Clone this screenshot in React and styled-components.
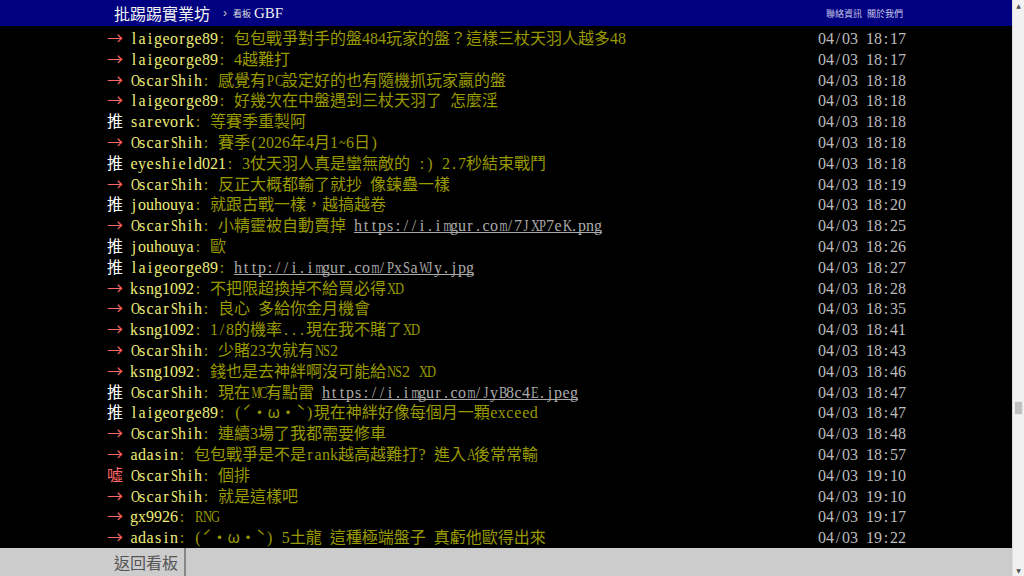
import React from "react";
import styled, { createGlobalStyle } from "styled-components";

const GlobalStyle = createGlobalStyle`
  html, body {
    margin: 0;
    padding: 0;
    height: 100%;
    overflow: hidden;
    background: #000;
  }
  #root {
    height: 100%;
  }
`;

const pushes = [
  ["→", "laigeorge89", "包包戰爭對手的盤484玩家的盤？這樣三杖天羽人越多48", "04/03 18:17"],
  ["→", "laigeorge89", "4越難打", "04/03 18:17"],
  ["→", "OscarShih", "感覺有PC設定好的也有隨機抓玩家贏的盤", "04/03 18:18"],
  ["→", "laigeorge89", "好幾次在中盤遇到三杖天羽了 怎麼淫", "04/03 18:18"],
  ["推", "sarevork", "等賽季重製阿", "04/03 18:18"],
  ["→", "OscarShih", "賽季(2026年4月1~6日)", "04/03 18:18"],
  ["推", "eyeshield021", "3仗天羽人真是蠻無敵的 :) 2.7秒結束戰鬥", "04/03 18:18"],
  ["→", "OscarShih", "反正大概都輸了就抄 像鍊蠱一樣", "04/03 18:19"],
  ["推", "jouhouya", "就跟古戰一樣，越搞越卷", "04/03 18:20"],
  ["→", "OscarShih", "小精靈被自動賣掉 ", "04/03 18:25", "https://i.imgur.com/7JXP7eK.png"],
  ["推", "jouhouya", "歐", "04/03 18:26"],
  ["推", "laigeorge89", "", "04/03 18:27", "http://i.imgur.com/PxSaWJy.jpg"],
  ["→", "ksng1092", "不把限超換掉不給買必得XD", "04/03 18:28"],
  ["→", "OscarShih", "良心 多給你金月機會", "04/03 18:35"],
  ["→", "ksng1092", "1/8的機率...現在我不賭了XD", "04/03 18:41"],
  ["→", "OscarShih", "少賭23次就有NS2", "04/03 18:43"],
  ["→", "ksng1092", "錢也是去神絆啊沒可能給NS2 XD", "04/03 18:46"],
  ["推", "OscarShih", "現在MC有點雷 ", "04/03 18:47", "https://i.imgur.com/JyB8c4E.jpeg"],
  ["推", "laigeorge89", "(ˊ・ω・ˋ)現在神絆好像每個月一顆exceed", "04/03 18:47"],
  ["→", "OscarShih", "連續3場了我都需要修車", "04/03 18:48"],
  ["→", "adasin", "包包戰爭是不是rank越高越難打? 進入A後常常輸", "04/03 18:57"],
  ["噓", "OscarShih", "個排", "04/03 19:10"],
  ["→", "OscarShih", "就是這樣吧", "04/03 19:10"],
  ["→", "gx9926", "RNG", "04/03 19:17"],
  ["→", "adasin", "(ˊ・ω・ˋ) 5土龍 這種極端盤子 真虧他歐得出來", "04/03 19:22"],
];

// terminal grid: every half-width char sits in an 8px cell
const squeezeOf = (c) => (/[mwMW]/.test(c) ? 0.64 : /[A-Z~]/.test(c) ? 0.78 : 1);

function Mono({ text }) {
  return [...text].map((c, i) => (
    <Cell key={i} squeeze={squeezeOf(c)}>
      {c}
    </Cell>
  ));
}

function Mixed({ text }) {
  const parts = text.split(/([\x00-\x7f]+)/).filter((p) => p !== "");
  return parts.map((p, i) =>
    /^[\x00-\x7f]+$/.test(p) ? <Mono key={i} text={p} /> : <Full key={i}>{p}</Full>
  );
}

export default function App() {
  return (
    <>
      <GlobalStyle />
      <Page>
        <Main>
          <TopBar>
            <BarInner>
              <Brand>批踢踢實業坊</Brand>
              <Crumb>›</Crumb>
              <BoardLabel>看板</BoardLabel>
              <BoardName>GBF</BoardName>
              <Links>
                <a href="#">聯絡資訊</a>
                <a href="#">關於我們</a>
              </Links>
            </BarInner>
          </TopBar>

          <Content>
            <Pushes>
              {pushes.map(([tag, user, text, time, link], i) => (
                <Push key={i}>
                  <Tag tone={tag === "推" ? "up" : "down"}>
                    <Full>{tag}</Full>
                  </Tag>
                  <UserId>
                    <Mono text={user} />
                  </UserId>
                  <PushContent>
                    <Mono text=": " />
                    <Mixed text={text} />
                    {link && (
                      <LinkText href="#">
                        <Mono text={link} />
                      </LinkText>
                    )}
                  </PushContent>
                  <DateTime>
                    <Mono text={time} />
                  </DateTime>
                </Push>
              ))}
            </Pushes>
          </Content>

          <BottomBar>
            <BarInner>
              <BackButton href="#">返回看板</BackButton>
            </BarInner>
          </BottomBar>
        </Main>

        <ScrollBar>
          <Arrow>▲</Arrow>
          <Track>
            <Thumb offset={401} />
          </Track>
          <Arrow>▼</Arrow>
        </ScrollBar>
      </Page>
    </>
  );
}

const Page = styled.div`
  display: flex;
  height: 576px;
  width: 1024px;
`;

const Main = styled.div`
  flex: 1;
  display: flex;
  flex-direction: column;
  background: #000;
  min-width: 0;
`;

const TopBar = styled.div`
  height: 26px;
  background: #000080;
  display: flex;
  align-items: center;
`;

const BarInner = styled.div`
  width: 800px;
  margin: 0 auto;
  display: flex;
  align-items: center;
  height: 100%;
`;

const Brand = styled.div`
  font-family: "Noto Sans CJK TC", sans-serif;
  font-size: 16px;
  color: #f2f2f2;
  padding-left: 8px;
  line-height: 26px;
`;

const Crumb = styled.span`
  font-family: "Liberation Sans", sans-serif;
  font-size: 12px;
  color: #ccc;
  margin: 0 6px 0 13px;
`;

const BoardLabel = styled.span`
  font-family: "Noto Sans CJK TC", sans-serif;
  font-size: 9px;
  color: #ddd;
  margin-right: 3px;
`;

const BoardName = styled.span`
  font-family: "Liberation Serif", serif;
  font-size: 15px;
  color: #f2f2f2;
`;

const Links = styled.div`
  margin-left: auto;
  padding-right: 3px;
  display: flex;
  gap: 5px;

  a {
    font-family: "Noto Sans CJK TC", sans-serif;
    font-size: 9px;
    color: #c8c8e8;
    text-decoration: none;
  }
`;

const Content = styled.div`
  flex: 1;
  padding-top: 1px;
  overflow: hidden;
`;

const Pushes = styled.div`
  width: 800px;
  margin: 0 auto;
`;

const Push = styled.div`
  display: flex;
  align-items: baseline;
  height: 20.8px;
  line-height: 20.8px;
  white-space: pre;
`;

const Cell = styled.span`
  display: inline-block;
  width: 8px;
  text-align: center;
  font-family: "Liberation Serif", serif;
  font-size: 16px;
  transform: scaleX(${(p) => p.squeeze});
`;

const Full = styled.span`
  font-family: "Noto Sans CJK TC", sans-serif;
  font-size: 16px;
`;

const Tag = styled.span`
  width: 24px;
  flex: none;
  padding-left: 1px;
  box-sizing: border-box;
  color: ${(p) => (p.tone === "up" ? "#fff" : "#f66")};
`;

const UserId = styled.span`
  color: #eeee78;
  flex: none;
`;

const PushContent = styled.span`
  color: #999900;
  flex: 1;
  min-width: 0;
`;

const LinkText = styled.a`
  color: #aaa;
  text-decoration: none;
  background: linear-gradient(currentColor, currentColor) left bottom 1px / 100% 1px no-repeat;
`;

const DateTime = styled.span`
  color: #bbb;
  flex: none;
`;

const BottomBar = styled.div`
  height: 28px;
  background: #ccc;
  flex: none;
`;

const BackButton = styled.a`
  display: flex;
  align-items: center;
  height: 100%;
  padding: 0 6px 0 8px;
  border-right: 2px solid #888;
  font-family: "Noto Sans CJK TC", sans-serif;
  font-size: 16px;
  color: #555;
  text-decoration: none;
`;

const ScrollBar = styled.div`
  width: 11px;
  flex: none;
  display: flex;
  flex-direction: column;
  background: #f1f1f1;
  border-left: 1px solid #dcdcdc;
`;

const Arrow = styled.div`
  height: 11px;
  font-size: 6px;
  line-height: 11px;
  text-align: center;
  color: #505050;
  font-family: "DejaVu Sans", sans-serif;
`;

const Track = styled.div`
  flex: 1;
  padding: 0 1px;
`;

const Thumb = styled.div`
  margin-top: ${(p) => p.offset - 11}px;
  height: 12px;
  background: #c1c1c1;
  border: 1px solid #e8e8e8;
`;
